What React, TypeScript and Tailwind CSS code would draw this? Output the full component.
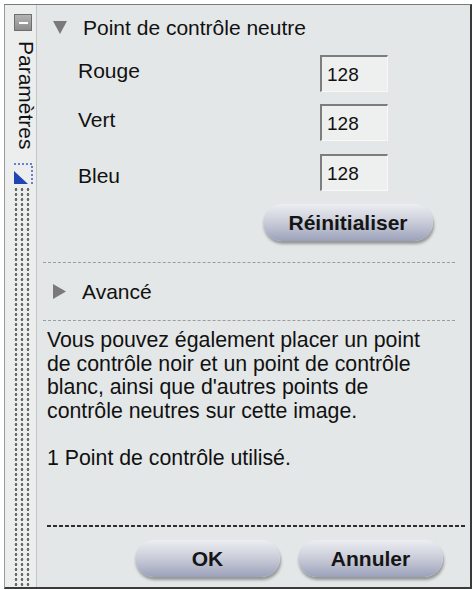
import React from "react"

const font = { fontFamily: '"Liberation Sans", Arial, sans-serif' }

function PillButton({ label, className }: { label: string; className: string }) {
  return (
    <button
      className={`h-[37px] rounded-full bg-gradient-to-b from-[#eceef2] via-[#c9ccd8] to-[#9ba1ba] text-[21px] font-bold text-[#151515] shadow-[1px_3px_3px_rgba(0,0,0,0.35)] ${className}`}
    >
      {label}
    </button>
  )
}

function ValueRow({ label, offset }: { label: string; offset: string }) {
  return (
    <div className="flex items-start">
      <div className={`w-[283px] pl-[41px] text-[21px] leading-[25px] ${offset}`}>{label}</div>
      <div className="flex h-[37px] w-[68px] items-center border-t-2 border-l-2 border-r border-b border-t-[#7d7d7d] border-l-[#7d7d7d] border-r-[#f8f8f8] border-b-[#f8f8f8] bg-[#eef0f0] pl-[5px] pt-[3px] text-[19px]">
        128
      </div>
    </div>
  )
}

export default function App() {
  return (
    <div className="h-[590px] w-[473px] bg-white pl-[4px] pt-[4px] text-[#111]" style={font}>
      <div className="flex h-[585px] w-[468px] border-t border-l border-r-2 border-b-2 border-t-[#7a7a7a] border-l-[#9a9a9a] border-r-[#3a3a3a] border-b-[#3a3a3a] bg-[#e4e7e7]">
        {/* side tab */}
        <div className="flex w-[32px] flex-col border-r border-[#c2c6c6] bg-[#eceeee]">
          <div className="ml-[9px] mt-[9px] flex h-[17px] w-[18px] items-center justify-center border border-[#6e6e6e] bg-gradient-to-b from-[#b4b4b4] to-[#8c8c8c]">
            <div className="h-[2px] w-[9px] bg-white" />
          </div>
          <div className="ml-[12px] mt-[10px] w-[19px] text-[21px] leading-[19px] [writing-mode:vertical-rl]">
            Paramètres
          </div>
          <svg className="ml-[8px] mt-[13px]" width="20" height="22" viewBox="0 0 20 22">
            <path d="M1 1 H19 V21" fill="none" stroke="#3a5cc0" strokeWidth="1.5" strokeDasharray="2 2" />
            <path d="M1 8 L15 21 H1 Z" fill="#1f45b5" />
          </svg>
          <div className="ml-[8px] mt-[2px] w-[18px] flex-1 bg-[radial-gradient(circle,#6a6a6a_1.2px,transparent_1.6px)] bg-[length:6px_5px]" />
        </div>

        {/* main panel */}
        <div className="flex flex-1 flex-col">
          <div className="flex items-center pl-[16px] pt-[10px] text-[21px] leading-[25px]">
            <svg width="14" height="13" viewBox="0 0 14 13">
              <path d="M0 0 H14 L7 13 Z" fill="#7a7a7a" />
            </svg>
            <span className="ml-[16px]">Point de contrôle neutre</span>
          </div>

          <div className="mt-[15px] flex flex-col">
            <ValueRow label="Rouge" offset="mt-[3px]" />
            <div className="mt-[12px]">
              <ValueRow label="Vert" offset="mt-[3px]" />
            </div>
            <div className="mt-[13px]">
              <ValueRow label="Bleu" offset="mt-[9px]" />
            </div>
          </div>

          <div className="mt-[13px] flex justify-end pr-[37px]">
            <PillButton label="Réinitialiser" className="w-[170px]" />
          </div>

          <div className="ml-[6px] mr-[15px] mt-[21px] border-t border-dashed border-[#9c9c9c]" />

          <div className="mt-[16px] flex items-center pl-[16px] text-[21px] leading-[25px]">
            <svg width="13" height="15" viewBox="0 0 13 15">
              <path d="M0 0 L13 7.5 L0 15 Z" fill="#7a7a7a" />
            </svg>
            <span className="ml-[16px]">Avancé</span>
          </div>

          <div className="ml-[6px] mr-[15px] mt-[16px] border-t border-dashed border-[#9c9c9c]" />

          <p className="ml-[10px] mt-[8px] text-[21.3px] leading-[23.5px]">
            Vous pouvez également placer un point
            <br />
            de contrôle noir et un point de contrôle
            <br />
            blanc, ainsi que d'autres points de
            <br />
            contrôle neutres sur cette image.
            <br />
            <br />1 Point de contrôle utilisé.
          </p>

          <div className="mt-auto ml-[10px] mr-[5px] h-[2px] bg-[repeating-linear-gradient(90deg,#2e2e2e_0_4px,transparent_4px_6px)]" />

          <div className="mb-[10px] mt-[13px] flex justify-end gap-[18px] pr-[27px]">
            <PillButton label="OK" className="w-[145px]" />
            <PillButton label="Annuler" className="w-[145px]" />
          </div>
        </div>
      </div>
    </div>
  )
}
